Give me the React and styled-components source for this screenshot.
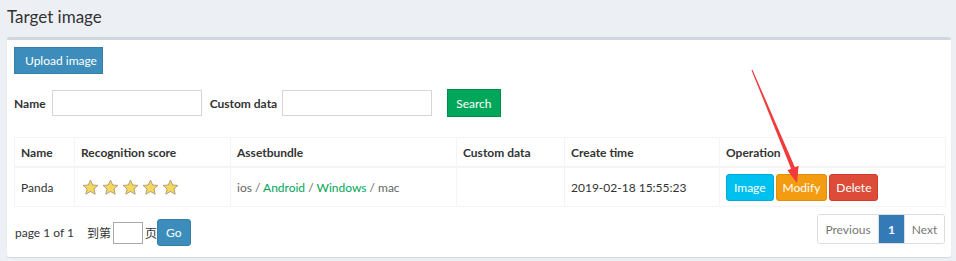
import styled, { createGlobalStyle } from "styled-components";

const GlobalStyle = createGlobalStyle`
  html, body {
    margin: 0;
    padding: 0;
    background: #ecf0f5;
  }
  body {
    font-family: Lato, "Noto Sans CJK SC", sans-serif;
    font-size: 12px;
    color: #333;
  }
`;

const Page = styled.div`
  position: relative;
  width: 956px;
  height: 261px;
  overflow: hidden;
  padding: 0 5px 0 7px;
  box-sizing: border-box;
`;

const Title = styled.h1`
  margin: 0;
  height: 37px;
  line-height: 34px;
  font-size: 17px;
  font-weight: 400;
  color: #333;
`;

const Box = styled.div`
  background: #fff;
  border-top: 3px solid #d2d6de;
  border-radius: 3px;
  box-shadow: 0 1px 1px rgba(0, 0, 0, 0.1);
  padding: 7px 6px 11px 7px;
  width: 944px;
  box-sizing: border-box;
`;

const Btn = styled.button`
  display: ${(p) => (p.$block ? "block" : "inline-block")};
  font-family: inherit;
  font-size: 12px;
  white-space: nowrap;
  color: #fff;
  background: ${(p) => p.$bg};
  border: 1px solid ${(p) => p.$border};
  border-radius: ${(p) => (p.$round ? "3px" : "0")};
  height: ${(p) => p.$h || 27}px;
  padding: 0 ${(p) => p.$px || 10}px;
  cursor: pointer;
`;

const SearchRow = styled.div`
  display: flex;
  align-items: center;
  margin-top: 15px;
  height: 28px;
`;

const Label = styled.label`
  font-weight: 700;
  margin-right: ${(p) => p.$gap || 2}px;
`;

const Input = styled.input`
  width: 150px;
  height: 26px;
  box-sizing: border-box;
  border: 1px solid #d2d6de;
  margin-right: ${(p) => p.$mr || 8}px;
`;

const Table = styled.table`
  margin-top: 20px;
  width: 931px;
  border-collapse: collapse;
  table-layout: fixed;
  border: 1px solid #f4f4f4;

  th {
    text-align: left;
    font-weight: 700;
    height: 28px;
    padding: 0 6px;
    border: 1px solid #f4f4f4;
    border-bottom: 2px solid #f4f4f4;
  }
  td {
    height: 27px;
    padding: 6px 6px 5px;
    border: 1px solid #f4f4f4;
    vertical-align: middle;
  }
`;

const Green = styled.span`
  color: #00a65a;
`;

const Muted = styled.span`
  color: #666;
`;

const Stars = styled.div`
  display: flex;
  gap: 3px;
  padding-left: 1px;
`;

const Ops = styled.div`
  display: flex;
  gap: 2px;
`;

const Footer = styled.div`
  display: flex;
  justify-content: space-between;
  align-items: flex-start;
  margin-top: 7px;
`;

const Jump = styled.div`
  display: flex;
  align-items: center;
  margin-top: 5px;
  padding-left: 1px;
`;

const PageInfo = styled.span`
  margin-right: 13px;
`;

const SmallInput = styled.input`
  width: 30px;
  height: 22px;
  box-sizing: border-box;
  border: 1px solid #a9a9a9;
  margin: 0 2px;
`;

const Pager = styled.div`
  display: flex;
  height: 28px;
  border: 1px solid #ddd;
  border-radius: 3px;
  overflow: hidden;
`;

const PageItem = styled.span`
  display: flex;
  align-items: center;
  justify-content: center;
  width: ${(p) => p.$w}px;
  color: ${(p) => (p.$active ? "#fff" : "#777")};
  background: ${(p) => (p.$active ? "#337ab7" : "#fff")};
  font-weight: ${(p) => (p.$active ? 700 : 400)};
  & + & {
    border-left: 1px solid #ddd;
  }
`;

const Overlay = styled.svg`
  position: absolute;
  left: 0;
  top: 0;
  pointer-events: none;
`;

function Star() {
  return (
    <svg width="17" height="17" viewBox="0 0 24 24">
      <path
        d="M12 1.5l3.1 7 7.4.6-5.6 5 1.7 7.4L12 17.6l-6.6 3.9 1.7-7.4-5.6-5 7.4-.6z"
        fill="#f6d75d"
        stroke="#a89a7a"
        strokeWidth="1.3"
        strokeLinejoin="round"
      />
    </svg>
  );
}

export default function App() {
  return (
    <Page>
      <GlobalStyle />
      <Title>Target image</Title>
      <Box>
        <Btn $block $bg="#3c8dbc" $border="#367fa9" $px={0} style={{ width: 89 }}>
          Upload image
        </Btn>
        <SearchRow>
          <Label $gap={6}>Name</Label>
          <Input $mr={8} />
          <Label $gap={5}>Custom data</Label>
          <Input $mr={15} />
          <Btn $bg="#00a65a" $border="#008d4c" $h={28} $px={8}>
            Search
          </Btn>
        </SearchRow>
        <Table>
          <colgroup>
            <col style={{ width: 60 }} />
            <col style={{ width: 156 }} />
            <col style={{ width: 226 }} />
            <col style={{ width: 108 }} />
            <col style={{ width: 155 }} />
            <col style={{ width: 226 }} />
          </colgroup>
          <thead>
            <tr>
              <th>Name</th>
              <th>Recognition score</th>
              <th>Assetbundle</th>
              <th>Custom data</th>
              <th>Create time</th>
              <th>Operation</th>
            </tr>
          </thead>
          <tbody>
            <tr>
              <td>Panda</td>
              <td>
                <Stars>
                  {[0, 1, 2, 3, 4].map((i) => (
                    <Star key={i} />
                  ))}
                </Stars>
              </td>
              <td>
                <Muted>ios / </Muted>
                <Green>Android</Green>
                <Muted> / </Muted>
                <Green>Windows</Green>
                <Muted> / mac</Muted>
              </td>
              <td></td>
              <td>2019-02-18 15:55:23</td>
              <td>
                <Ops>
                  <Btn $bg="#00c0ef" $border="#00acd6" $round $px={7}>
                    Image
                  </Btn>
                  <Btn $bg="#f39c12" $border="#e08e0b" $round $px={6}>
                    Modify
                  </Btn>
                  <Btn $bg="#dd4b39" $border="#d73925" $round $px={6}>
                    Delete
                  </Btn>
                </Ops>
              </td>
            </tr>
          </tbody>
        </Table>
        <Footer>
          <Jump>
            <PageInfo>page 1 of 1</PageInfo>
            <span>到第</span>
            <SmallInput />
            <span>页</span>
            <Btn $bg="#3c8dbc" $border="#367fa9" $round $px={8}>
              Go
            </Btn>
          </Jump>
          <Pager>
            <PageItem $w={60}>Previous</PageItem>
            <PageItem $active $w={25}>1</PageItem>
            <PageItem $w={39}>Next</PageItem>
          </Pager>
        </Footer>
      </Box>
      <Overlay width="956" height="261">
        <polygon
          points="751.5,70.2 752.5,69.8 794.9,167.2 798.6,165.7 797,183 787.4,170.3 791.1,168.8"
          fill="#f23a3a"
        />
      </Overlay>
    </Page>
  );
}
